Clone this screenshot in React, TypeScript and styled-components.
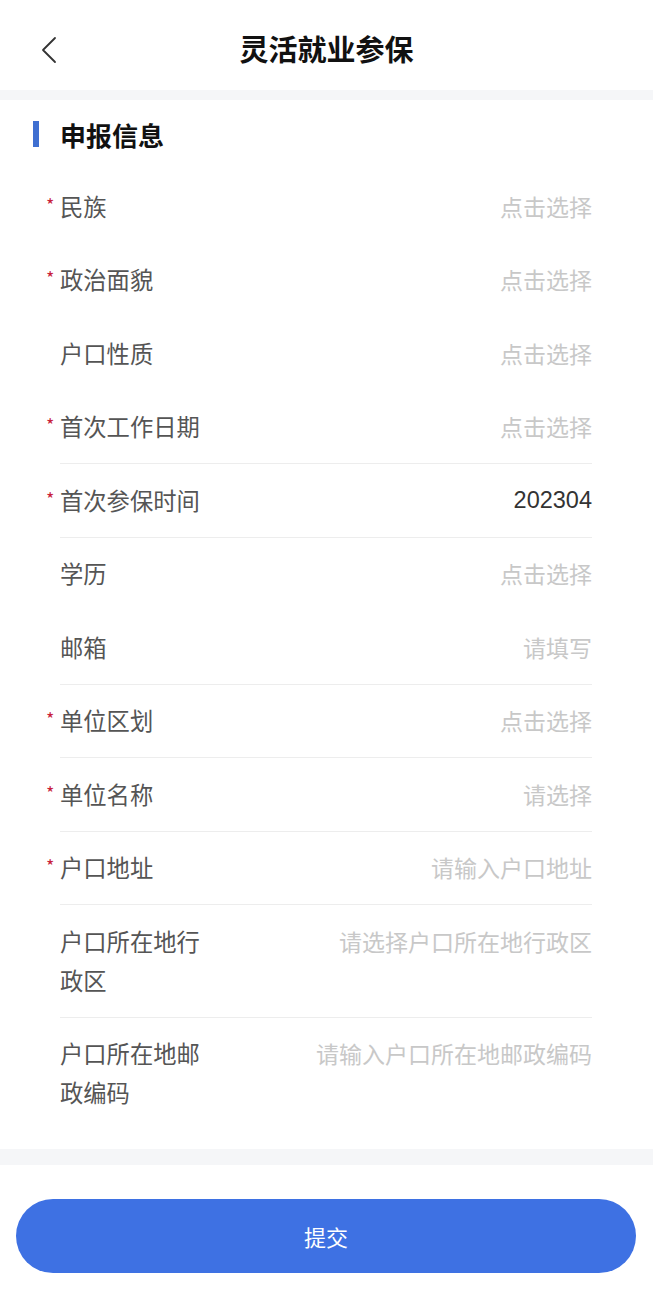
import React from "react";
import styled, { createGlobalStyle } from "styled-components";

const GlobalStyle = createGlobalStyle`
  body {
    margin: 0;
    background: #fff;
    font-family: "Noto Sans CJK SC", "Noto Sans", sans-serif;
  }
`;

interface Field {
  label: string;
  required?: boolean;
  value?: string;
  placeholder?: string;
  divider?: boolean;
}

const fields: Field[] = [
  { label: "民族", required: true, placeholder: "点击选择" },
  { label: "政治面貌", required: true, placeholder: "点击选择" },
  { label: "户口性质", placeholder: "点击选择" },
  { label: "首次工作日期", required: true, placeholder: "点击选择", divider: true },
  { label: "首次参保时间", required: true, value: "202304", divider: true },
  { label: "学历", placeholder: "点击选择" },
  { label: "邮箱", placeholder: "请填写", divider: true },
  { label: "单位区划", required: true, placeholder: "点击选择", divider: true },
  { label: "单位名称", required: true, placeholder: "请选择", divider: true },
  { label: "户口地址", required: true, placeholder: "请输入户口地址", divider: true },
  { label: "户口所在地行政区", placeholder: "请选择户口所在地行政区", divider: true },
  { label: "户口所在地邮政编码", placeholder: "请输入户口所在地邮政编码" },
];

export default function App() {
  return (
    <Page>
      <GlobalStyle />
      <NavBar>
        <BackButton>
          <svg width="16" height="28" viewBox="0 0 16 28" fill="none">
            <path d="M14 2 L2 14 L14 26" stroke="#333" strokeWidth="1.8" strokeLinecap="round" strokeLinejoin="round" />
          </svg>
        </BackButton>
        <NavTitle>灵活就业参保</NavTitle>
      </NavBar>
      <Gap />
      <Section>
        <SectionHeader>
          <SectionBar />
          <SectionTitle>申报信息</SectionTitle>
        </SectionHeader>
        <List>
          {fields.map((f) => (
            <Row key={f.label} $divider={!!f.divider}>
              <Label>
                {f.required && <Star>*</Star>}
                {f.label}
              </Label>
              <Value $filled={!!f.value}>{f.value ?? f.placeholder}</Value>
            </Row>
          ))}
        </List>
      </Section>
      <Gap $h={16} />
      <Footer>
        <SubmitButton>提交</SubmitButton>
      </Footer>
    </Page>
  );
}

const Page = styled.div`
  width: 653px;
  min-height: 1299px;
  background: #fff;
`;

const NavBar = styled.div`
  position: relative;
  height: 90px;
  display: flex;
  align-items: center;
  justify-content: center;
`;

const BackButton = styled.div`
  position: absolute;
  left: 41px;
  top: 36px;
  display: flex;
`;

const NavTitle = styled.h1`
  margin: 0;
  margin-top: 6px;
  font-size: 29px;
  font-weight: 700;
  color: #111;
`;

const Gap = styled.div<{ $h?: number }>`
  height: ${(p) => p.$h ?? 10}px;
  background: #f5f6f8;
`;

const Section = styled.div`
  padding-bottom: 19px;
`;

const SectionHeader = styled.div`
  height: 70px;
  display: flex;
  align-items: center;
  padding: 0 0 2px 33px;
  box-sizing: border-box;
  gap: 21px;
`;

const SectionBar = styled.div`
  width: 6px;
  height: 26px;
  background: #3f6fd1;
`;

const SectionTitle = styled.h2`
  margin: 0;
  font-size: 26px;
  font-weight: 700;
  color: #111;
`;

const List = styled.div`
  padding: 0 61px 0 60px;
`;

const Row = styled.div<{ $divider: boolean }>`
  display: flex;
  justify-content: space-between;
  align-items: flex-start;
  padding: 16.5px 0 17px;
  border-bottom: 1px solid ${(p) => (p.$divider ? "#ededed" : "transparent")};
`;

const Label = styled.div`
  position: relative;
  width: 146px;
  font-size: 23.3px;
  line-height: 39px;
  color: #555;
`;

const Star = styled.span`
  position: absolute;
  left: -14px;
  top: -2px;
  font-size: 18px;
  color: #c81e3c;
`;

const Value = styled.div<{ $filled: boolean }>`
  font-size: ${(p) => (p.$filled ? "23.5px" : "23px")};
  line-height: 39px;
  color: ${(p) => (p.$filled ? "#333" : "#c8c8c8")};
  font-family: ${(p) => (p.$filled ? '"Liberation Sans", Arial, sans-serif' : "inherit")};
  text-align: right;
`;

const Footer = styled.div`
  padding: 34px 17px 25px 16px;
`;

const SubmitButton = styled.button`
  width: 100%;
  height: 74px;
  border: none;
  border-radius: 37px;
  background: #3e71e3;
  color: #fff;
  font-family: inherit;
  font-size: 22px;
`;
